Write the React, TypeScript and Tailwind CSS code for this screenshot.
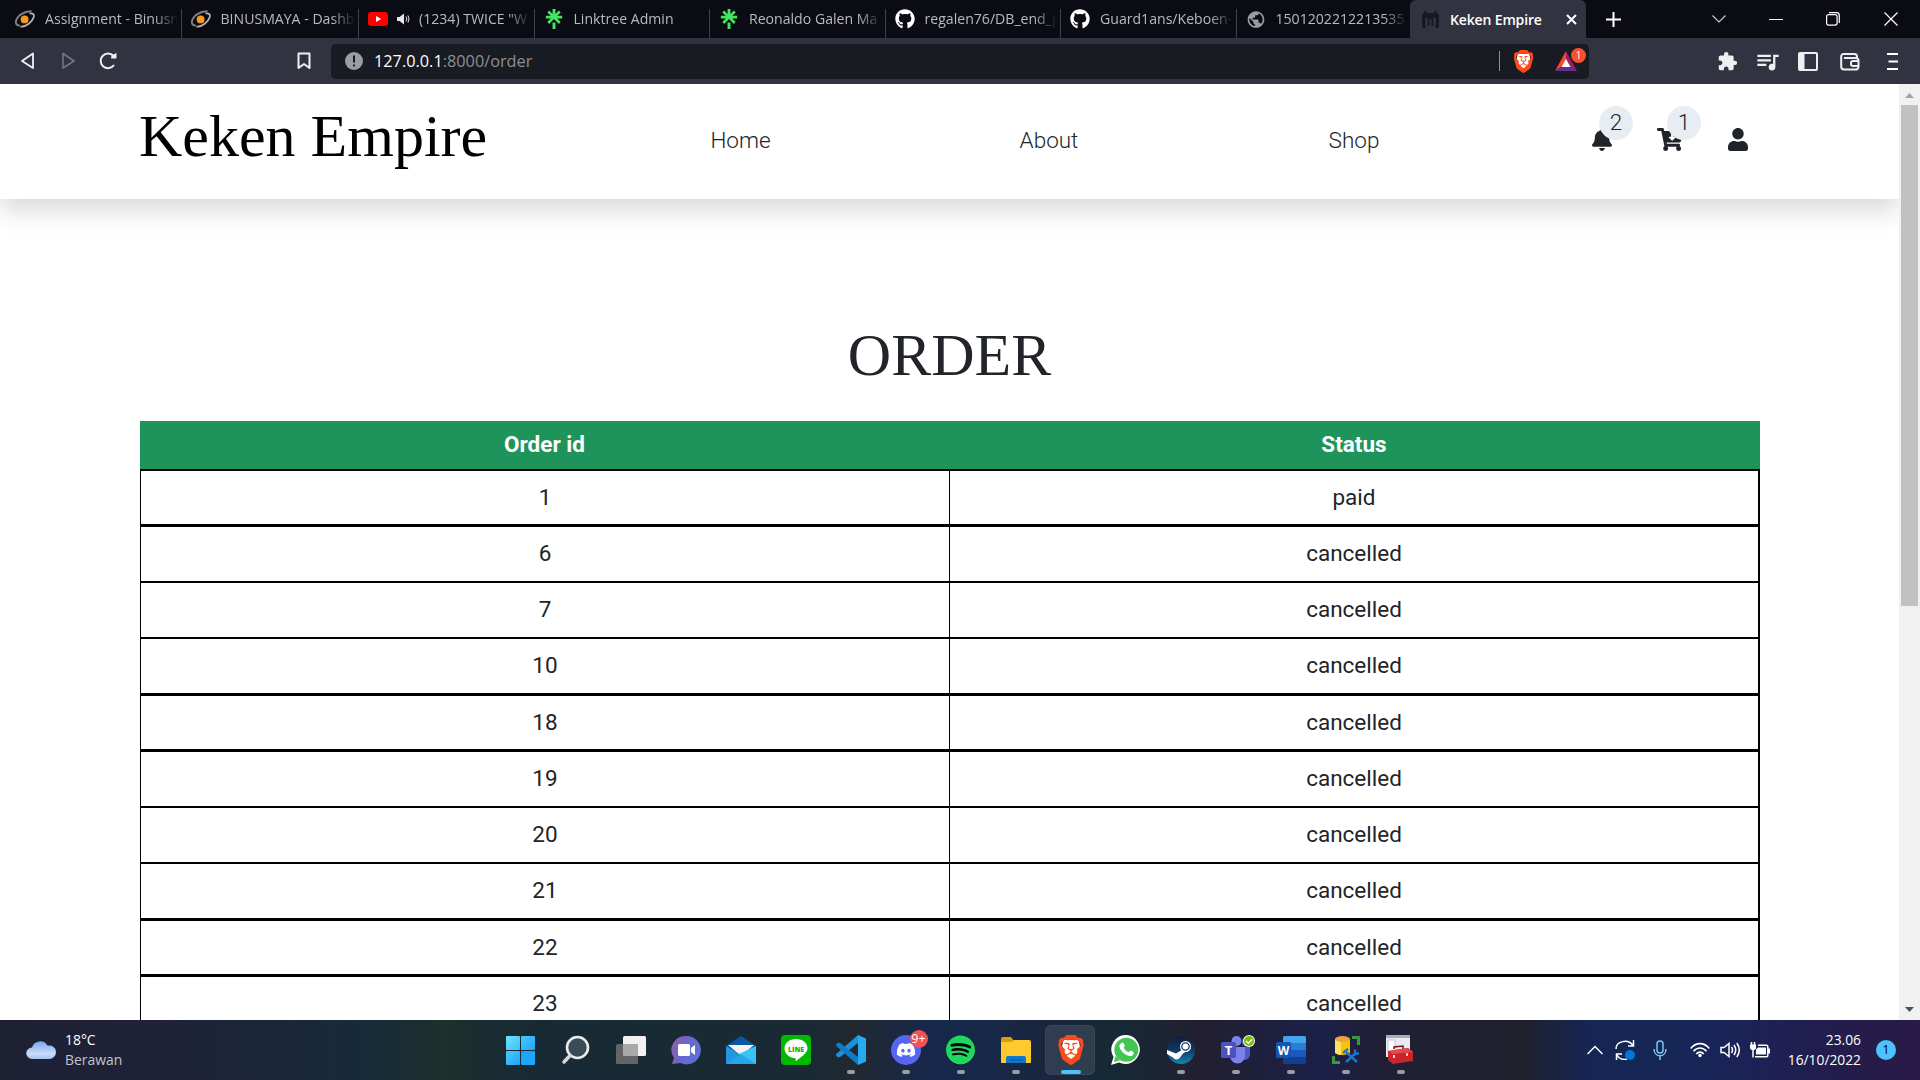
import type { ReactNode } from "react";
import { FaBell, FaCartArrowDown, FaUser, FaGithub, FaDiscord, FaSpotify } from "react-icons/fa";
import { MdExtension, MdQueueMusic, MdPublic } from "react-icons/md";
import { SiBrave, SiLinktree } from "react-icons/si";

const orders: { id: string; status: string; line: string }[] = [
  { id: "1", status: "paid", line: "h-[55px] border-t-2" },
  { id: "6", status: "cancelled", line: "h-[57px] border-t-3" },
  { id: "7", status: "cancelled", line: "h-[56px] border-t-2" },
  { id: "10", status: "cancelled", line: "h-[56px] border-t-2" },
  { id: "18", status: "cancelled", line: "h-[56px] border-t-3" },
  { id: "19", status: "cancelled", line: "h-[57px] border-t-3" },
  { id: "20", status: "cancelled", line: "h-[56px] border-t-2" },
  { id: "21", status: "cancelled", line: "h-[56px] border-t-2" },
  { id: "22", status: "cancelled", line: "h-[56px] border-t-3" },
  { id: "23", status: "cancelled", line: "h-[56px] border-t-3" },
];

function BinusIcon() {
  return (
    <svg width="20" height="18" viewBox="0 0 20 18" fill="none">
      <path d="M16.500 1.200C9.500 .6 1.600 6 .9 11.800c-.3 2.600 1.600 3.700 4 3.600" stroke="#7f7f80" strokeWidth="2" />
      <path d="M14.500 3.400c3.500-.6 5 1.200 4.200 3.800C17.200 12 11.500 16.500 5.500 16.900" stroke="#b5b5b5" strokeWidth="1.800" />
      <circle cx="9.600" cy="9.400" r="3.900" fill="#f59a23" />
    </svg>
  );
}

function YoutubeIcon() {
  return (
    <svg width="20" height="14" viewBox="0 0 20 14">
      <rect width="20" height="14" rx="3" fill="#f00" />
      <path d="M8 4l5.200 3L8 10z" fill="#fff" />
    </svg>
  );
}

function KekenIcon() {
  return (
    <svg width="19" height="18" viewBox="0 0 19 18" fill="#17181f">
      <path d="M4 0l1.500 2.500L7.500 3.500 9.500 3l2 .5 2-1L15 0l1 3 2 2v4l-.5 9H14.500l.5-9-2-2-.8 1v8h-1.600V9H8.400v7H6.800V8L6 7 4 9l.5 9H1.500L1 9V5l2-2z" />
    </svg>
  );
}

function BraveIcon({ size }: { size: number }) {
  return (
    <svg width={size} height={size} viewBox="0 0 24 24">
      <path d="M6 3.800h12l1.500 7-3.500 7-4 3-4-3-3.500-7z" fill="#fff" />
      <SiBrave size={24} color="#fb4a1c" />
    </svg>
  );
}

type TabInfo = { title: string; icon: ReactNode; audio?: boolean; gap: string; width: string };

const tabs: TabInfo[] = [
  { title: "Assignment - Binusm", icon: <BinusIcon />, gap: "gap-[10px]", width: "w-[175.500px]" },
  { title: "BINUSMAYA - Dashb", icon: <BinusIcon />, gap: "gap-[10px]", width: "w-[177.500px]" },
  { title: "(1234) TWICE \"W", icon: <YoutubeIcon />, audio: true, gap: "gap-[9px]", width: "w-[175.500px]" },
  { title: "Linktree Admin", icon: <SiLinktree size={20} color="#43e660" />, gap: "gap-[10px]", width: "w-[175.500px]" },
  { title: "Reonaldo Galen Ma", icon: <SiLinktree size={20} color="#43e660" />, gap: "gap-[10px]", width: "w-[175.500px]" },
  { title: "regalen76/DB_end_p", icon: <FaGithub size={20} color="#fff" />, gap: "gap-[10px]", width: "w-[175.500px]" },
  { title: "Guard1ans/Keboen-", icon: <FaGithub size={20} color="#fff" />, gap: "gap-[10px]", width: "w-[175.500px]" },
  { title: "1501202212213535", icon: <MdPublic size={21} color="#9a9da6" />, gap: "gap-[10px]", width: "w-[173.500px]" },
];

function TabBar() {
  return (
    <div className="flex h-[38px] bg-[#0b0b14] pl-[6px] text-[14.1px] text-[#b9babf]">
      {tabs.map((t, i) => (
        <div key={t.title} className={`flex h-full shrink-0 items-end ${t.width}`}>
          <div className={`flex h-[29px] w-full items-start pl-[9px] ${i < 7 ? "border-r border-[#41424a]" : ""} ${t.gap}`}>
            <span className="flex h-[20px] w-[20px] shrink-0 items-center justify-center">{t.icon}</span>
            {t.audio && (
              <svg className="shrink-0" width="13" height="20" viewBox="0 0 13 20" fill="#e6e6e8">
                <path d="M0 8h2.500L7 4.500v11L2.500 12H0z" />
                <path d="M9 7.500q1.600 2.500 0 5M11 6.500q2 3.500 0 7" stroke="#e6e6e8" fill="none" />
              </svg>
            )}
            <span className="block min-w-0 flex-1 overflow-hidden leading-[20px] whitespace-nowrap [mask-image:linear-gradient(to_right,#000_calc(100%_-_26px),transparent_calc(100%_-_3px))]">
              {t.title}
            </span>
          </div>
        </div>
      ))}
      <div className="flex h-full w-[176px] shrink-0 items-center rounded-t-[6px] bg-[#313341] pl-[11px] font-semibold text-white">
        <KekenIcon />
        <span className="ml-[10px] w-[116px] text-[14px] tracking-[-0.15px]">Keken Empire</span>
        <svg width="11" height="11" viewBox="0 0 11 11" stroke="#fff" strokeWidth="2">
          <path d="M1 1l9 9M10 1l-9 9" />
        </svg>
      </div>
      <div className="flex flex-1 items-center pl-[20px]">
        <svg width="15" height="15" viewBox="0 0 15 15" stroke="#fff" strokeWidth="2">
          <path d="M7.500 0v15M0 7.500h15" />
        </svg>
        <svg className="ml-[91px]" width="14" height="8" viewBox="0 0 14 8" fill="none" stroke="#c8c8cc" strokeWidth="1.200">
          <path d="M.5.5L7 7l6.500-6.500" />
        </svg>
        <div className="ml-[43px] h-px w-[14px] bg-white" />
        <svg className="ml-[43px]" width="14" height="14" viewBox="0 0 14 14" fill="none" stroke="#fff" strokeWidth="1.200">
          <rect x=".6" y="2.600" width="10.500" height="10.500" rx="2" />
          <path d="M3 .6h7.500a2.800 2.800 0 0 1 2.800 2.800V11" />
        </svg>
        <svg className="ml-[44px]" width="14" height="14" viewBox="0 0 14 14" stroke="#fff" strokeWidth="1.200">
          <path d="M.5.5l13 13M13.500.5l-13 13" />
        </svg>
      </div>
    </div>
  );
}

function Toolbar() {
  return (
    <div className="flex h-[46px] items-center bg-[#313341]">
      <svg className="ml-[20px]" width="15" height="18" viewBox="0 0 15 18" fill="none" stroke="#f0f0f2" strokeWidth="1.800" strokeLinejoin="round">
        <path d="M13 1.500v14.500L2 9z" />
      </svg>
      <svg className="ml-[26px]" width="15" height="18" viewBox="0 0 15 18" fill="none" stroke="#737582" strokeWidth="1.600" strokeLinejoin="round">
        <path d="M2 1.500v14.500L13 9z" />
      </svg>
      <svg className="ml-[22px]" width="20" height="18" viewBox="0 0 20 18" fill="none" stroke="#f0f0f2" strokeWidth="2">
        <path d="M15.500 4A7.300 7.300 0 1 0 16 13" />
        <path d="M18.500 1v5.500h-5.500l.5-3z" fill="#f0f0f2" stroke="none" />
      </svg>
      <svg className="ml-[179px]" width="14" height="18" viewBox="0 0 14 18" fill="none" stroke="#f0f0f2" strokeWidth="2" strokeLinejoin="round">
        <path d="M1.500 1.500h11v14.500L7 12l-5.500 4z" />
      </svg>
      <div className="ml-[20px] flex h-[35px] w-[1258px] items-center rounded-[5px] bg-[#191b22] pl-[14px]">
        <svg width="18" height="18" viewBox="0 0 18 18">
          <circle cx="9" cy="9" r="9" fill="#9b9da6" />
          <path d="M9 3.500v7M9 12.500v2" stroke="#191b22" strokeWidth="2" />
        </svg>
        <span className="ml-[11px] text-[16.300px] leading-[24px] text-[#8d8f96]">
          <span className="text-white">127.0.0.1</span>:8000/order
        </span>
        <div className="ml-auto h-[20px] w-px bg-[#8d8f96]" />
        <div className="ml-[12px]">
          <BraveIcon size={23} />
        </div>
        <div className="relative mr-[12px] ml-[20px]">
          <svg width="22" height="20" viewBox="0 0 22 20">
            <path d="M11 0L0 20l11-7z" fill="#ff4724" />
            <path d="M11 0l11 20-11-7z" fill="#9e1f63" />
            <path d="M0 20h22l-11-8z" fill="#662d91" />
            <path d="M11 8l4.500 8h-9z" fill="#fff" />
          </svg>
          <span className="absolute -top-[3px] left-[16px] flex h-[15px] w-[15px] items-center justify-center rounded-full bg-[#fb4f2b] text-[10px] text-white">1</span>
        </div>
      </div>
      <MdExtension className="ml-[128px]" size={21} color="#efeff1" />
      <MdQueueMusic className="ml-[16px]" size={27} color="#efeff1" />
      <svg className="ml-[17px]" width="20" height="19" viewBox="0 0 20 19" fill="none" stroke="#efeff1" strokeWidth="2">
        <rect x="1" y="1" width="18" height="17" rx="1" />
        <path d="M4 1v17" strokeWidth="5" />
      </svg>
      <svg className="ml-[22px]" width="20" height="19" viewBox="0 0 20 19" fill="none" stroke="#efeff1" strokeWidth="2">
        <path d="M17 6V4.500A2.500 2.500 0 0 0 14.500 2H4a2.500 2.500 0 0 0-2.800 2.500V15A3 3 0 0 0 4 17.500h11.500A2.700 2.700 0 0 0 18.500 15V8.500A2.500 2.500 0 0 0 16 6H4" />
        <path d="M19 9h-6a2 2 0 0 0-2 2.500 2 2 0 0 0 2 2.500h6" />
      </svg>
      <svg className="ml-[27px]" width="11" height="17" viewBox="0 0 11 17" stroke="#fff" strokeWidth="2">
        <path d="M0 1h11M1.500 8.500H11M0 16h11" />
      </svg>
    </div>
  );
}

function SiteHeader() {
  return (
    <header className="flex h-[115px] bg-white pl-[139px] text-[22.500px] font-light text-[#212529] shadow-[0_12px_24px_rgba(0,0,0,0.15)]">
      <div className="w-[447px] pt-[16px] font-['Liberation_Serif',serif] text-[60px] leading-[72px] font-normal text-black">Keken Empire</div>
      <nav className="flex pt-[39px] leading-[34px]">
        <span className="w-[309px] text-center">Home</span>
        <span className="w-[308px] text-center">About</span>
        <span className="w-[302px] text-center">Shop</span>
      </nav>
      <div className="relative mt-[44px] ml-[87px] h-[23px] w-[20px]">
        <FaBell className="h-[23px] w-[20px]" />
        <span className="absolute -top-[22px] left-[7px] flex h-[34px] w-[34px] items-center justify-center rounded-full bg-[#e8edf4] pb-[2px] leading-[30px]">2</span>
      </div>
      <div className="relative mt-[44px] ml-[45px] h-[23px] w-[26px]">
        <FaCartArrowDown className="h-[23px] w-[26px]" />
        <span className="absolute -top-[22px] left-[10px] flex h-[34px] w-[34px] items-center justify-center rounded-full bg-[#e8edf4] pb-[2px] leading-[30px]">1</span>
      </div>
      <FaUser className="mt-[44px] ml-[45px] h-[23px] w-[20px]" />
    </header>
  );
}

function OrderPage() {
  return (
    <div className="h-full w-[1899px] overflow-hidden bg-white font-['Roboto',sans-serif]">
      <SiteHeader />
      <h1 className="mt-[120px] text-center font-['Liberation_Serif',serif] text-[60px] leading-[72px] text-[#212529]">ORDER</h1>
      <div className="mt-[30px] ml-[140px] w-[1620px] text-center text-[22.500px] text-[#212529]">
        <div className="flex h-[48px] bg-[#1e945b] leading-[46px] font-bold text-white">
          <div className="w-[809px]">Order id</div>
          <div className="w-[810px]">Status</div>
        </div>
        {orders.map((o) => (
          <div key={o.id} className={`flex border-r-2 border-l border-black leading-[52px] ${o.line}`}>
            <div className="w-[809px] border-r border-black">{o.id}</div>
            <div className="flex-1">{o.status}</div>
          </div>
        ))}
      </div>
    </div>
  );
}

function Scrollbar() {
  return (
    <div className="flex w-[21px] flex-col items-center bg-[#f1f1f1]">
      <svg className="mt-[9px]" width="9" height="5" viewBox="0 0 9 5">
        <path d="M4.500 0L9 5H0z" fill="#a3a3a3" />
      </svg>
      <div className="mt-[7px] h-[501px] w-[17px] bg-[#c1c1c1]" />
      <svg className="mt-auto mb-[8px]" width="9" height="5" viewBox="0 0 9 5">
        <path d="M4.500 5L9 0H0z" fill="#505050" />
      </svg>
    </div>
  );
}

function Svg30({ children }: { children: ReactNode }) {
  return <svg width="30" height="30" viewBox="0 0 30 30">{children}</svg>;
}

const apps: { name: string; icon: ReactNode; running?: boolean; active?: boolean; badge?: string }[] = [
  {
    name: "start",
    icon: (
      <Svg30>
        <defs>
          <linearGradient id="win" x1="0" y1="0" x2="1" y2="1">
            <stop offset="0" stopColor="#6be4fb" />
            <stop offset="1" stopColor="#3fc0fb" />
          </linearGradient>
          <linearGradient id="winb" x1="0" y1="0" x2="1" y2="1">
            <stop offset="0" stopColor="#4cc8fb" />
            <stop offset="1" stopColor="#1ea6fb" />
          </linearGradient>
        </defs>
        <rect x="0" y="1" width="14" height="14" rx="1" fill="url(#win)" />
        <rect x="15" y="1" width="14" height="14" rx="1" fill="url(#winb)" />
        <rect x="0" y="16" width="14" height="14" rx="1" fill="url(#winb)" />
        <rect x="15" y="16" width="14" height="14" rx="1" fill="#1ca6fb" />
      </Svg30>
    ),
  },
  {
    name: "search",
    icon: (
      <Svg30>
        <circle cx="16.500" cy="12.500" r="10.500" fill="#3b4b56" stroke="#ececec" strokeWidth="2.600" />
        <path d="M9 20.500l-6 6.500" stroke="#d9d9d9" strokeWidth="3.500" strokeLinecap="round" />
      </Svg30>
    ),
  },
  {
    name: "task view",
    icon: (
      <Svg30>
        <rect x="7" y="1" width="23" height="20" rx="1.500" fill="#f1f1f1" />
        <rect x="0" y="9" width="22" height="20" rx="1.500" fill="#626466" />
        <path d="M7 9h15v12H8.500A1.500 1.500 0 0 1 7 19.500z" fill="#a8a9aa" />
      </Svg30>
    ),
  },
  {
    name: "chat",
    icon: (
      <Svg30>
        <defs>
          <linearGradient id="chat" x1="0" y1="0.300" x2="1" y2="0.700">
            <stop offset="0" stopColor="#8c5fae" />
            <stop offset="0.500" stopColor="#6868cc" />
            <stop offset="1" stopColor="#5b72dc" />
          </linearGradient>
        </defs>
        <path d="M15.500 1a14.200 14.200 0 1 1-6 27L1 29l2-6A14 14 0 0 1 15.500 1z" fill="url(#chat)" />
        <rect x="7" y="9" width="12" height="12" rx="1.500" fill="#fff" />
        <path d="M20 13l4-3v10l-4-3z" fill="#fff" />
      </Svg30>
    ),
  },
  {
    name: "mail",
    icon: (
      <Svg30>
        <path d="M0 11L15 1l15 10v4H0z" fill="#0a57a4" />
        <path d="M2 10h26L15 21z" fill="#f4f4f4" />
        <path d="M0 11l15 9 15-9v18H0z" fill="#2196e3" />
        <path d="M30 11v18L13 19z" fill="#36c3f5" />
        <path d="M0 29h30L15 19.500z" fill="#2aa4ea" />
      </Svg30>
    ),
  },
  {
    name: "line",
    icon: (
      <Svg30>
        <rect width="30" height="30" rx="4" fill="#00b900" />
        <path d="M15 4c6.500 0 11.500 4 11.500 9.300 0 5-6.500 9-11.300 12.700-.7.200-.6-.5-.4-2.500C8.500 23 3.500 19 3.500 13.300 3.500 8 8.500 4 15 4z" fill="#fff" />
        <text x="7" y="16.500" fontSize="7" fontWeight="800" fill="#00b900" textLength="16" lengthAdjust="spacingAndGlyphs">LINE</text>
      </Svg30>
    ),
  },
  {
    name: "code",
    running: true,
    icon: (
      <Svg30>
        <path d="M22 8L4.500 21.800 2 22.500 0 20.500l.2-1.500L22 0z" fill="#1f8fd8" />
        <path d="M22 22L4.500 8.200 2 7.500 0 9.500l.2 1.500L22 30z" fill="#0f7cc8" />
        <path d="M22 0l8 3.500v23L22 30z" fill="#29a9f2" />
      </Svg30>
    ),
  },
  {
    name: "discord",
    running: true,
    badge: "9+",
    icon: (
      <span className="flex h-[30px] w-[30px] items-center justify-center rounded-full bg-[#5865f2]">
        <FaDiscord size={20} color="#fff" />
      </span>
    ),
  },
  {
    name: "spotify",
    running: true,
    icon: (
      <span className="flex h-[29px] w-[29px] items-center justify-center rounded-full bg-black">
        <FaSpotify size={30} color="#1ed760" />
      </span>
    ),
  },
  {
    name: "explorer",
    running: true,
    icon: (
      <Svg30>
        <path d="M0 4a2 2 0 0 1 2-2h8l3 4v5H0z" fill="#dd9d06" />
        <path d="M0 7h10l3-2h15a2 2 0 0 1 2 2v21H0z" fill="#fdc92f" />
        <path d="M5 28v-5a2 2 0 0 1 2-2h16a2 2 0 0 1 2 2v5z" fill="#0f78cf" />
        <path d="M9 25h13" stroke="#0a55a0" />
      </Svg30>
    ),
  },
  { name: "brave", active: true, icon: <BraveIcon size={30} /> },
  {
    name: "whatsapp",
    icon: (
      <Svg30>
        <path d="M15.500 0A14.500 14.500 0 1 1 8 27.500L0 30l2.500-8A14.500 14.500 0 0 1 15.500 0z" fill="#fff" />
        <circle cx="15.300" cy="14.700" r="12" fill="#43c554" />
        <path d="M4.500 21L3 27l6-1.500z" fill="#43c554" />
        <path d="M10.500 8c1-1 1.800-.7 2.200.2l1 2.300c.3.700-.9 1.700-1 2.300 1.200 2.200 2.800 3.500 5 4.400.6-.3 1.500-1.900 2.200-1.600l2.500 1.300c1 .5-.2 3.600-2 4-4 1-11.500-4.500-12-9.700 0-1.200.9-2.200 2.100-3.200z" fill="#fff" />
      </Svg30>
    ),
  },
  {
    name: "steam",
    running: true,
    icon: (
      <Svg30>
        <defs>
          <linearGradient id="steam" x1="0" y1="0" x2="0" y2="1">
            <stop offset="0" stopColor="#111d3b" />
            <stop offset="0.500" stopColor="#123764" />
            <stop offset="1" stopColor="#1387b8" />
          </linearGradient>
        </defs>
        <circle cx="15" cy="15" r="14" fill="url(#steam)" />
        <path d="M1 15l9 3.500 5-3 1-7 9 5-8 5-3 4a4 4 0 0 1-7 0L1 19z" fill="#fff" />
        <circle cx="19.500" cy="11.500" r="5.500" fill="#fff" />
        <circle cx="19.500" cy="11.500" r="3.700" fill="none" stroke="#16396a" strokeWidth="1.300" />
      </Svg30>
    ),
  },
  {
    name: "teams",
    running: true,
    icon: (
      <svg className="-mr-[4px]" width="34" height="30" viewBox="0 0 34 30">
        <circle cx="15.500" cy="6" r="5" fill="#7b83eb" />
        <circle cx="25" cy="7" r="4" fill="#5059c9" />
        <path d="M20 12h9v8a6 6 0 0 1-6 5z" fill="#5059c9" />
        <path d="M9 12h15v9a7.500 7.500 0 0 1-15 0z" fill="#7b83eb" />
        <rect x="0" y="7" width="15" height="16" rx="1.500" fill="#4b53bc" />
        <text x="7.500" y="20" textAnchor="middle" fontSize="13" fontWeight="700" fill="#fff">T</text>
        <circle cx="28" cy="6" r="6" fill="#fff" />
        <circle cx="28" cy="6" r="5" fill="#79ba0b" />
        <path d="M25 6l2.300 2.300L31 4.500" stroke="#fff" strokeWidth="1.500" fill="none" />
      </svg>
    ),
  },
  {
    name: "word",
    running: true,
    icon: (
      <Svg30>
        <path d="M7 2.500A1.500 1.500 0 0 1 8.500 1h20A1.500 1.500 0 0 1 30 2.500V8H7z" fill="#41a5ee" />
        <path d="M7 8h23v7H7z" fill="#2b7cd3" />
        <path d="M7 15h23v7H7z" fill="#185abd" />
        <path d="M7 22h23v5.500a1.500 1.500 0 0 1-1.500 1.500h-20A1.500 1.500 0 0 1 7 27.500z" fill="#103f91" />
        <rect x="0" y="7" width="15" height="16" rx="1.500" fill="#1454b4" />
        <text x="7.500" y="19.500" textAnchor="middle" fontSize="12" fontWeight="700" fill="#fff">W</text>
      </Svg30>
    ),
  },
  {
    name: "database",
    running: true,
    icon: (
      <Svg30>
        <path d="M4 4v14q7 4 15 0V4z" fill="#f7c500" />
        <path d="M4 4v14q3 2 6 2V5z" fill="#ffe067" />
        <ellipse cx="11.500" cy="4" rx="7.500" ry="3" fill="#eda23b" />
        <path d="M21 2.500h6.500V10M9 27.500H2.500V21" stroke="#3d9443" strokeWidth="3" fill="none" />
        <path d="M15 17l11 10M25 18L15 27" stroke="#1f76c4" strokeWidth="2.400" />
        <path d="M12 18l5-4M24 14.500v4h4" stroke="#1f76c4" strokeWidth="2.400" fill="none" />
      </Svg30>
    ),
  },
  {
    name: "toolbox",
    running: true,
    icon: (
      <Svg30>
        <rect x="0" y="0" width="24" height="22" fill="#e9edf1" />
        <path d="M0 0h24v3H0z" fill="#a6adb5" />
        <path d="M2 5h7v12H2z" fill="#fff" stroke="#c2c7cd" />
        <path d="M8 14v-2l9-1v3" stroke="#7a1315" strokeWidth="1.500" fill="none" />
        <path d="M2 16l20-3 5 4v9l-20 3-5-4z" fill="#c9252a" />
        <path d="M2 16l20-3 5 4-20 2z" fill="#e5484b" />
        <path d="M8 20v3M21 18v3" stroke="#fff" strokeWidth="1.500" />
      </Svg30>
    ),
  },
];

function Taskbar() {
  return (
    <div className="flex h-[60px] bg-[linear-gradient(90deg,#1e2134_0px,#1f2138_160px,#1b2738_270px,#172a3a_360px,#1c302c_445px,#192b32_490px,#172a35_560px,#1a2a34_820px,#22282f_850px,#17284a_925px,#16284a_970px,#1a2640_1040px,#162a36_1110px,#221f30_1200px,#1b2048_1320px,#201f36_1380px,#1f2030_1450px,#20202c_1520px,#152655_1590px,#162658_1690px,#1f2054_1780px,#241c4a_1860px,#2a1a48_1920px)]">
      <div className="flex w-[492px] pl-[26px]">
        <svg className="mt-[20px]" width="30" height="20" viewBox="0 0 30 20">
          <defs>
            <linearGradient id="cloud" x1="0" y1="0" x2="0" y2="1">
              <stop offset="0" stopColor="#7ba5ee" />
              <stop offset="0.700" stopColor="#c9dcf9" />
              <stop offset="1" stopColor="#a4c3f5" />
            </linearGradient>
          </defs>
          <path d="M6 19a5.700 5.700 0 0 1 0-11.500A8.500 8.500 0 0 1 21.500 5.600 6.800 6.800 0 1 1 23 19z" fill="url(#cloud)" />
        </svg>
        <div className="mt-[10px] ml-[9px] text-[13.900px] leading-[20px] text-white">
          <div>18°C</div>
          <div className="text-[#c3c5cd]">Berawan</div>
        </div>
      </div>
      {apps.map((a) => (
        <div key={a.name} className="flex w-[55px] shrink-0 justify-center pt-[5px]">
          <div className={`relative flex h-[50px] w-[50px] flex-col items-center rounded-[6px] pt-[10px] ${a.active ? "bg-white/10 ring-1 ring-white/5 ring-inset" : ""}`}>
            <div className="ml-[2px] flex h-[30px] items-center">{a.icon}</div>
            {a.badge && (
              <span className="absolute top-[5px] right-[2px] flex h-[18px] w-[18px] items-center justify-center rounded-full bg-[#f05252] text-[12.500px] leading-none text-white">
                {a.badge}
              </span>
            )}
            {a.running && <div className="mt-[5px] ml-[3px] h-[4px] w-[8px] rounded-full bg-[#9b9da3]" />}
            {a.active && <div className="mt-[5px] ml-[2px] h-[4px] w-[20px] rounded-full bg-[#4cc2ff]" />}
          </div>
        </div>
      ))}
      <div className="flex flex-1 items-center pl-[160px]">
        <svg width="16" height="10" viewBox="0 0 16 10" fill="none" stroke="#fff" strokeWidth="1.500">
          <path d="M.5 9L8 1.500 15.500 9" />
        </svg>
        <svg className="ml-[12px]" width="20" height="20" viewBox="0 0 20 20" fill="none" stroke="#fff" strokeWidth="1.500">
          <path d="M1 9C1 1 13-1.500 18 5.500M18.500 0v6H13M12 19.300C7 20 3.500 18 2 15M1.500 20v-6H7" />
          <circle cx="15" cy="15" r="5" fill="#0078d7" stroke="none" />
        </svg>
        <svg className="ml-[18px]" width="14" height="20" viewBox="0 0 14 20" fill="none" stroke="#7cc7ee" strokeWidth="1.500">
          <rect x="4" y="1" width="6" height="12" rx="3" />
          <path d="M1 9c0 9 12 9 12 0M7 16v4" />
        </svg>
        <svg className="ml-[23px]" width="20" height="16" viewBox="0 0 20 16" fill="none" stroke="#fff" strokeWidth="1.600">
          <path d="M.7 6.500c5-6.500 13.600-6.500 18.600 0M3.500 9.300c3.500-4.500 9.500-4.500 13 0M6.300 12c2-2.500 5.400-2.500 7.400 0" />
          <circle cx="10" cy="13.500" r="1.700" fill="#fff" stroke="none" />
        </svg>
        <svg className="ml-[10px]" width="21" height="16" viewBox="0 0 21 16" fill="none" stroke="#fff" strokeWidth="1.500">
          <path d="M1 5.500h3l5-4v13l-5-4H1zM11.500 5q2 3 0 6M14 3q3.500 5 0 10M16.800 1q5 7 0 14" />
        </svg>
        <svg className="ml-[9px]" width="20" height="16" viewBox="0 0 20 16" fill="none" stroke="#fff" strokeWidth="1.500">
          <path d="M8 3.300h8.500a1.300 1.300 0 0 1 1.300 1.300v8.800a1.300 1.300 0 0 1-1.300 1.300H5" />
          <path d="M8 5.500h8v7H6v-5z M0 2.500h6v4L4.500 8h-3L0 6.500zM18 6.500h2v5h-2z" fill="#fff" stroke="none" />
          <path d="M1.500 0v3M4.500 0v3M3 7v8.500" />
        </svg>
        <div className="-mt-[1px] ml-auto text-right text-[13.800px] leading-[20px] text-white">
          <div>23.06</div>
          <div>16/10/2022</div>
        </div>
        <span className="mr-[24px] ml-[15px] flex h-[20px] w-[20px] items-center justify-center rounded-full bg-[#4cc2ff] text-[12px] text-black">1</span>
      </div>
    </div>
  );
}

export default function App() {
  return (
    <div className="flex h-[1080px] w-[1920px] flex-col overflow-hidden bg-white font-['Open_Sans',sans-serif]">
      <TabBar />
      <Toolbar />
      <main className="flex h-[936px]">
        <OrderPage />
        <Scrollbar />
      </main>
      <Taskbar />
    </div>
  );
}
